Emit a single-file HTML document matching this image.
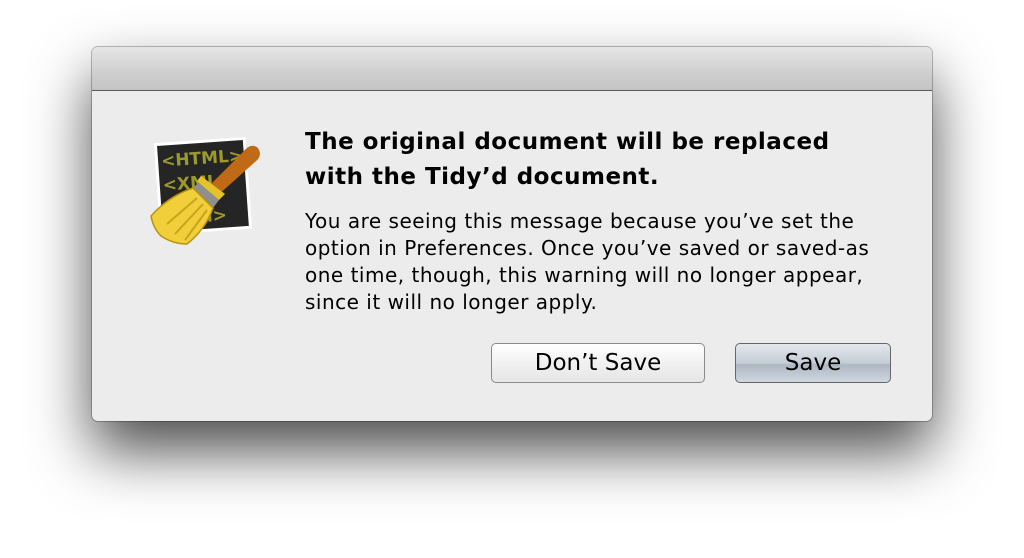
<!DOCTYPE html>
<html><head><style>
html,body{margin:0;padding:0;width:1024px;height:558px;background:#fff;overflow:hidden;font-family:"DejaVu Sans","Liberation Sans",sans-serif}
.win{position:absolute;left:92px;top:47px;width:840px;height:374px;background:#ececec;border-radius:6px;box-shadow:0 30px 60px rgba(0,0,0,.7),0 0 0 1px rgba(0,0,0,.25);overflow:hidden}
.tb{position:absolute;left:0;top:0;width:840px;height:43px;background:linear-gradient(#e6e6e6,#cfcfcf 60%,#c4c4c4);border-bottom:1px solid #5a5a5a}
.t{position:absolute;left:213px;top:78px;font-size:23px;font-weight:bold;line-height:35px;letter-spacing:0.5px;color:#000;white-space:nowrap}
.m{position:absolute;left:213px;top:161px;font-size:20px;line-height:27px;letter-spacing:0.5px;color:#000;white-space:nowrap}
.b{position:absolute;top:296px;height:40px;border:1px solid #8a8a8a;border-radius:5px;font-size:23px;text-align:center;line-height:38px;color:#000;box-sizing:border-box}
.b1{left:399px;width:214px;background:linear-gradient(#fff,#f1f1f1 50%,#e6e6e6)}
.b2{left:643px;width:156px;background:linear-gradient(#e3e8ee,#c5cdd6 50%,#aeb8c3 55%,#cfd7e0);border-color:#666}
</style></head><body>
<div class="win">
<div class="tb"></div>
<svg style="position:absolute;left:55px;top:85px" width="120" height="120" viewBox="0 0 120 120">
<g transform="rotate(-4 55 55)">
<rect x="10" y="8" width="92" height="92" fill="#fff"/>
<rect x="13" y="11" width="86" height="86" fill="#252525"/>
<text x="16" y="32" font-size="17" font-weight="bold" fill="#9c9a2c" font-family="DejaVu Sans">&lt;HTML&gt;</text>
<text x="16" y="56" font-size="17" font-weight="bold" fill="#9c9a2c" font-family="DejaVu Sans">&lt;XML&gt;</text>
<text x="40" y="90" font-size="17" font-weight="bold" fill="#9c9a2c" font-family="DejaVu Sans">ml&gt;</text>
</g>
<path d="M60 56 L96 20 Q104 10 111 16 Q116 24 108 30 L70 64 Z" fill="#c06a15"/>
<path d="M52 50 L72 68 L66 76 L46 56 Z" fill="#8f8f8f"/>
<path d="M46 56 L66 76 Q58 98 40 112 Q26 112 14 104 Q6 96 4 84 Q22 64 46 56 Z" fill="#f0cf3a" stroke="#b89410" stroke-width="1.5"/>
<path d="M20 92 L50 66 M28 102 L56 72 M38 108 L60 78" stroke="#caa21b" stroke-width="2"/>
<path d="M54 44 L78 62 L72 68 L50 49Z" fill="#e6c22d"/>
</svg>
<div class="t">The original document will be replaced<br>with the Tidy’d document.</div>
<div class="m">You are seeing this message because you’ve set the<br>option in Preferences. Once you’ve saved or saved-as<br>one time, though, this warning will no longer appear,<br>since it will no longer apply.</div>
<div class="b b1">Don’t Save</div>
<div class="b b2">Save</div>
</div>
</body></html>
